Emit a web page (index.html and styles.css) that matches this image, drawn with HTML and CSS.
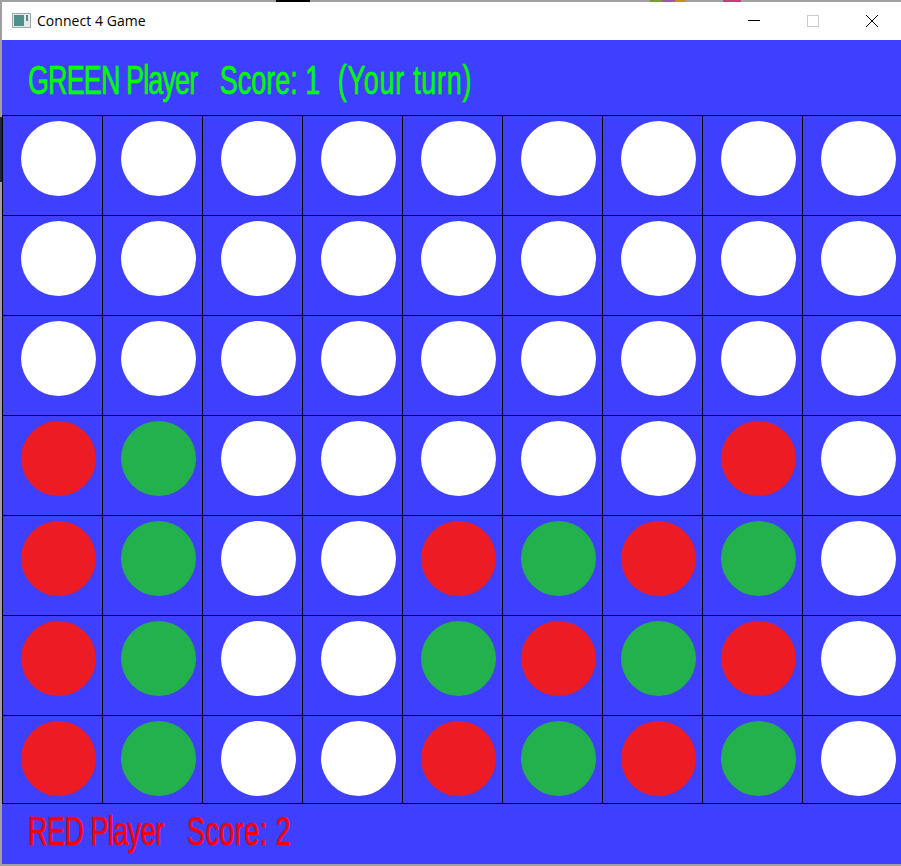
FILE: index.html
```html
<!DOCTYPE html>
<html lang="en">
<head>
<meta charset="utf-8">
<title>Connect 4 Game</title>
<link rel="stylesheet" href="styles.css">
</head>
<body>
<div class="window">
  <header class="titlebar">
    <svg class="app-icon" width="19" height="15" viewBox="0 0 19 15">
      <rect x="0.5" y="0.5" width="18" height="14" fill="#e4e8ea" stroke="#a3a7aa"/>
      <rect x="2" y="2" width="10" height="11" fill="#4e8f8a"/>
      <rect x="14" y="2" width="2" height="6" fill="#4e8f8a"/>
    </svg>
    <span class="title">Connect 4 Game</span>
    <div class="controls">
      <span class="control"><svg width="12" height="12" viewBox="0 0 12 12"><path d="M0 5.5H12" stroke="#000"/></svg></span>
      <span class="control"><svg width="12" height="12" viewBox="0 0 12 12"><rect x="0.5" y="0.5" width="11" height="11" fill="none" stroke="#ccc"/></svg></span>
      <span class="control"><svg width="12" height="12" viewBox="0 0 12 12"><path d="M0 0L12 12M12 0L0 12" stroke="#000"/></svg></span>
    </div>
  </header>
  <div class="score score-top"><span class="label green"><span class="who-green">GREEN Player</span>&nbsp;&nbsp; Score: 1&nbsp; <span class="turn">(Your turn)</span></span></div>
  <main class="board">
    <div class="cell"><i class="disc"></i></div><div class="cell"><i class="disc"></i></div><div class="cell"><i class="disc"></i></div><div class="cell"><i class="disc"></i></div><div class="cell"><i class="disc"></i></div><div class="cell"><i class="disc"></i></div><div class="cell"><i class="disc"></i></div><div class="cell"><i class="disc"></i></div><div class="cell"><i class="disc"></i></div>
    <div class="cell"><i class="disc"></i></div><div class="cell"><i class="disc"></i></div><div class="cell"><i class="disc"></i></div><div class="cell"><i class="disc"></i></div><div class="cell"><i class="disc"></i></div><div class="cell"><i class="disc"></i></div><div class="cell"><i class="disc"></i></div><div class="cell"><i class="disc"></i></div><div class="cell"><i class="disc"></i></div>
    <div class="cell"><i class="disc"></i></div><div class="cell"><i class="disc"></i></div><div class="cell"><i class="disc"></i></div><div class="cell"><i class="disc"></i></div><div class="cell"><i class="disc"></i></div><div class="cell"><i class="disc"></i></div><div class="cell"><i class="disc"></i></div><div class="cell"><i class="disc"></i></div><div class="cell"><i class="disc"></i></div>
    <div class="cell"><i class="disc r"></i></div><div class="cell"><i class="disc g"></i></div><div class="cell"><i class="disc"></i></div><div class="cell"><i class="disc"></i></div><div class="cell"><i class="disc"></i></div><div class="cell"><i class="disc"></i></div><div class="cell"><i class="disc"></i></div><div class="cell"><i class="disc r"></i></div><div class="cell"><i class="disc"></i></div>
    <div class="cell"><i class="disc r"></i></div><div class="cell"><i class="disc g"></i></div><div class="cell"><i class="disc"></i></div><div class="cell"><i class="disc"></i></div><div class="cell"><i class="disc r"></i></div><div class="cell"><i class="disc g"></i></div><div class="cell"><i class="disc r"></i></div><div class="cell"><i class="disc g"></i></div><div class="cell"><i class="disc"></i></div>
    <div class="cell"><i class="disc r"></i></div><div class="cell"><i class="disc g"></i></div><div class="cell"><i class="disc"></i></div><div class="cell"><i class="disc"></i></div><div class="cell"><i class="disc g"></i></div><div class="cell"><i class="disc r"></i></div><div class="cell"><i class="disc g"></i></div><div class="cell"><i class="disc r"></i></div><div class="cell"><i class="disc"></i></div>
    <div class="cell"><i class="disc r"></i></div><div class="cell"><i class="disc g"></i></div><div class="cell"><i class="disc"></i></div><div class="cell"><i class="disc"></i></div><div class="cell"><i class="disc r"></i></div><div class="cell"><i class="disc g"></i></div><div class="cell"><i class="disc r"></i></div><div class="cell"><i class="disc g"></i></div><div class="cell"><i class="disc"></i></div>
  </main>
  <div class="score score-bottom"><span class="label red"><span class="who-red">RED Player</span>&nbsp;&nbsp; <span class="score-red">Score: 2</span></span></div>
</div>
</body>
</html>
```
FILE: styles.css
```css
html {
  background-color: #a0a0a0;
  background-image:
    linear-gradient(to right, #a0a0a0 0 276px, #000 276px 310px, #a0a0a0 310px 650px, #7a9a3c 650px 662px, #a05aa0 662px 675px, #c09030 675px 686px, #a0a0a0 686px 723px, #c0407a 723px 741px, #a0a0a0 741px),
    linear-gradient(to bottom, #a0a0a0 0 117px, #1c2440 117px 182px, #a0a0a0 182px);
  background-size: 100% 2px, 2px 100%;
  background-repeat: no-repeat;
}
html, body {
  margin: 0;
  padding: 0;
  height: 100%;
  overflow: hidden;
}
.window {
  width: 899px;
  height: 862px;
  margin: 2px 0 0 2px;
  display: flex;
  flex-direction: column;
  background: #3f3fff;
  overflow: hidden;
}
.titlebar {
  height: 38px;
  flex: none;
  display: flex;
  align-items: center;
  background: #fff;
  padding-left: 10px;
}
.app-icon { margin: 0 6px 2px 0; }
.title {
  font: 14px "Open Sans", "Liberation Sans", sans-serif;
  letter-spacing: 0.05px;
  color: #000;
  margin-bottom: 2px;
}
.controls {
  margin-left: auto;
  display: flex;
}
.control {
  width: 59px;
  display: flex;
  justify-content: center;
}
.score {
  flex: none;
  padding-left: 26px;
  box-sizing: border-box;
  display: flex;
  align-items: center;
}
.score-top { height: 75px; padding-top: 5px; }
.score-bottom { height: 59px; padding-bottom: 6px; }
.label {
  font: 40px/1 "Liberation Sans", sans-serif;
  white-space: nowrap;
  display: inline-block;
  transform: scaleX(0.674);
  transform-origin: left center;
  -webkit-text-stroke: 0.6px currentColor;
}
.who-green { letter-spacing: -1.3px; }
.turn { letter-spacing: 1.08px; margin-left: 4px; }
.who-red { letter-spacing: -0.75px; }
.score-red { letter-spacing: 0.7px; margin-left: 1px; }
.green { color: #00ff00; }
.red { color: #ff0000; }
.board {
  flex: none;
  display: grid;
  grid-template-columns: repeat(9, 100px);
  grid-template-rows: repeat(6, 100px) 88px;
  border-bottom: 1px solid #000;
  height: 689px;
  box-sizing: border-box;
}
.cell {
  box-sizing: border-box;
  border-left: 1px solid #000;
  border-top: 1px solid #000;
  padding: 5px 0 0 18px;
  overflow: hidden;
}
.disc {
  display: block;
  width: 75px;
  height: 75px;
  border-radius: 50%;
  background: #fff;
}
.disc.r { background: #ed1c24; }
.disc.g { background: #22b14c; }
```
